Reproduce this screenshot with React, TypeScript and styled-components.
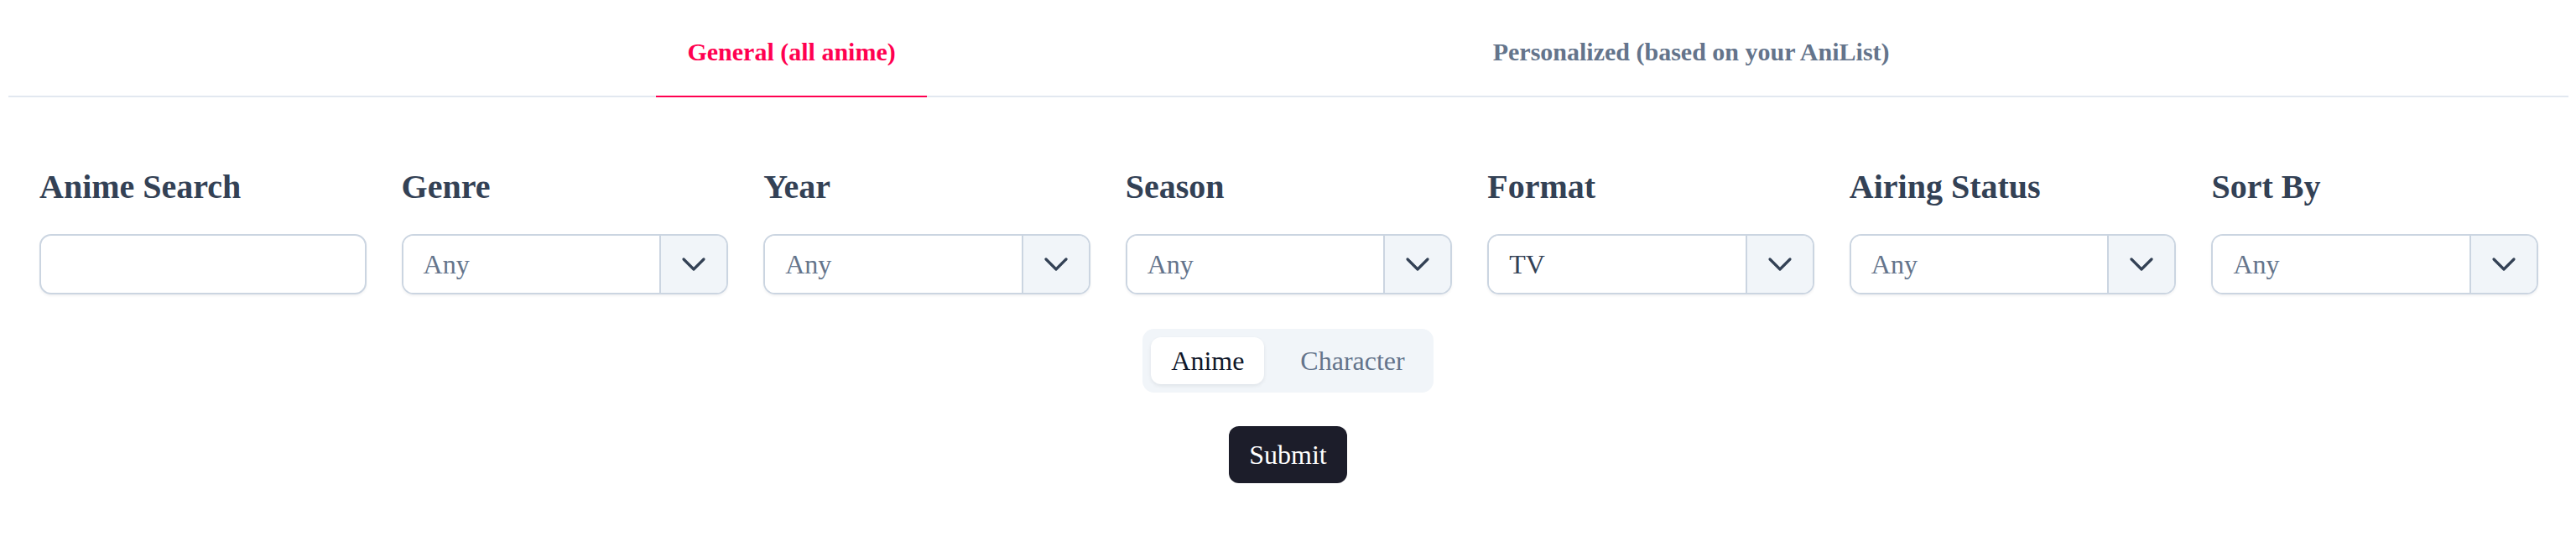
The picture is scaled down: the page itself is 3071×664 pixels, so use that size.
import React from 'react';
import styled, {createGlobalStyle} from "styled-components";

const GlobalStyle = createGlobalStyle`
  body {
    margin: 0;
    background: #ffffff;
    font-family: "Liberation Serif", "Times New Roman", serif;
  }
`

const filters = [
    {label: 'Anime Search', kind: 'text'},
    {label: 'Genre', value: 'Any'},
    {label: 'Year', value: 'Any'},
    {label: 'Season', value: 'Any'},
    {label: 'Format', value: 'TV', chosen: true},
    {label: 'Airing Status', value: 'Any'},
    {label: 'Sort By', value: 'Any'},
]

const Chevron = () => (
    <svg width="30" height="18" viewBox="0 0 30 18" fill="none">
        <polyline points="3,3 15,15 27,3" stroke="#334155" strokeWidth="3.2"
                  strokeLinecap="round" strokeLinejoin="round"/>
    </svg>
)

export default function App() {
    return (
        <Page>
            <GlobalStyle/>
            <TabBar>
                <Tab active>General (all anime)</Tab>
                <Tab>Personalized (based on your AniList)</Tab>
            </TabBar>
            <FilterRow>
                {filters.map(f => (
                    <Field key={f.label}>
                        <Label>{f.label}</Label>
                        {f.kind === 'text' ? (
                            <TextInput type="text"/>
                        ) : (
                            <SelectBox>
                                <SelectValue chosen={f.chosen}>{f.value}</SelectValue>
                                <SelectButton><Chevron/></SelectButton>
                            </SelectBox>
                        )}
                    </Field>
                ))}
            </FilterRow>
            <Toggle>
                <ToggleOption active>Anime</ToggleOption>
                <ToggleOption>Character</ToggleOption>
            </Toggle>
            <SubmitButton>Submit</SubmitButton>
        </Page>
    );
}

const Page = styled.div`
  display: flex;
  flex-direction: column;
  align-items: stretch;
  min-height: 664px;
`

const TabBar = styled.div`
  display: flex;
  justify-content: center;
  gap: 638px;
  margin: 0 9px 0 10px;
  border-bottom: 2px solid #e2e8f0;
`

const Tab = styled.div<{ active?: boolean }>`
  padding: 42px 37px 32px;
  margin-bottom: -2px;
  font-size: 30px;
  line-height: 40px;
  font-weight: 700;
  color: ${p => p.active ? '#ff0050' : '#64748b'};
  border-bottom: 2px solid ${p => p.active ? '#ff0050' : 'transparent'};
`

const FilterRow = styled.div`
  display: grid;
  grid-template-columns: repeat(7, 1fr);
  column-gap: 42px;
  padding: 79px 45px 0 47px;
`

const Field = styled.div`
  display: flex;
  flex-direction: column;
`

const Label = styled.label`
  font-size: 40px;
  line-height: 56px;
  font-weight: 700;
  color: #334155;
  margin-bottom: 28px;
`

const TextInput = styled.input`
  box-sizing: border-box;
  height: 72px;
  width: 100%;
  border: 2px solid #cbd5e1;
  border-radius: 14px;
  background: #ffffff;
  box-shadow: 0 2px 3px rgba(15, 23, 42, 0.05);
  outline: none;
`

const SelectBox = styled.div`
  box-sizing: border-box;
  display: flex;
  height: 72px;
  border: 2px solid #cbd5e1;
  border-radius: 14px;
  overflow: hidden;
  box-shadow: 0 2px 3px rgba(15, 23, 42, 0.05);
`

const SelectValue = styled.div<{ chosen?: boolean }>`
  flex: 1;
  display: flex;
  align-items: center;
  padding: 0 24px;
  font-size: 32px;
  color: ${p => p.chosen ? '#334155' : '#64748b'};
  background: #ffffff;
`

const SelectButton = styled.div`
  width: 78px;
  display: flex;
  align-items: center;
  justify-content: center;
  background: #f1f5f9;
  border-left: 2px solid #cbd5e1;
`

const Toggle = styled.div`
  align-self: center;
  display: flex;
  gap: 19px;
  margin-top: 41px;
  padding: 10px;
  border-radius: 14px;
  background: #f1f5f9;
`

const ToggleOption = styled.div<{ active?: boolean }>`
  height: 56px;
  display: flex;
  align-items: center;
  padding: 0 24px;
  font-size: 32px;
  border-radius: 12px;
  color: ${p => p.active ? '#0f172a' : '#64748b'};
  background: ${p => p.active ? '#ffffff' : 'transparent'};
  box-shadow: ${p => p.active ? '0 2px 4px rgba(15, 23, 42, 0.08)' : 'none'};
`

const SubmitButton = styled.button`
  align-self: center;
  margin-top: 40px;
  height: 68px;
  padding: 0 24px;
  border: none;
  border-radius: 12px;
  background: #1c1d2a;
  color: #ffffff;
  font-family: "Liberation Serif", "Times New Roman", serif;
  font-size: 32px;
`
